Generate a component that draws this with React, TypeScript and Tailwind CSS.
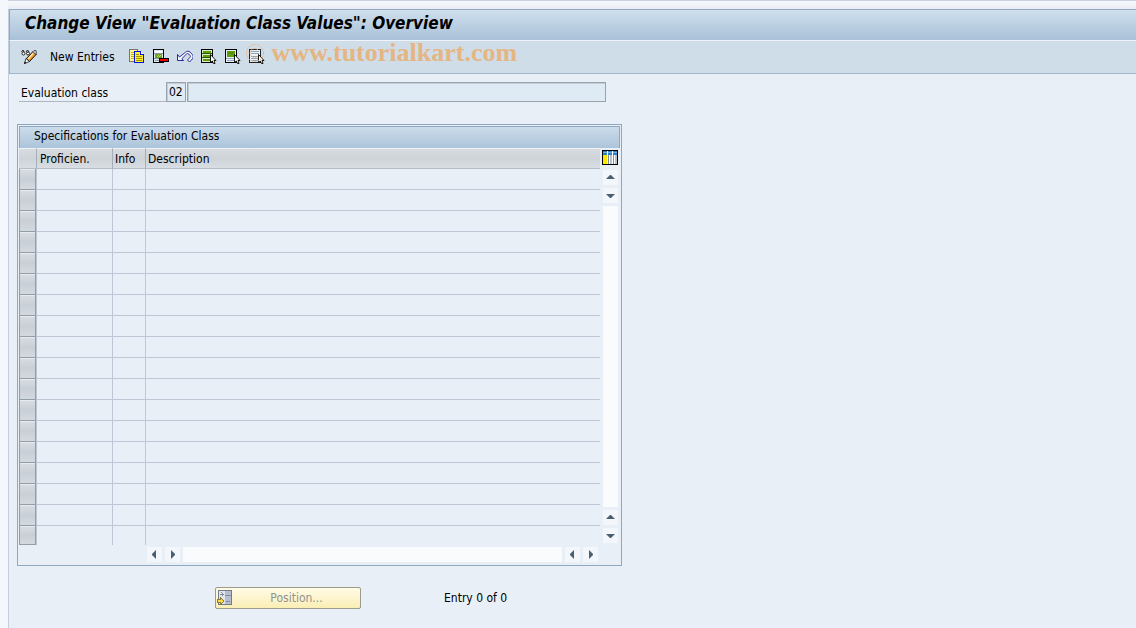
import React from "react";

type IconProps = { className?: string };

function Svg({ className = "", children }: React.PropsWithChildren<IconProps>) {
  return (
    <svg
      viewBox="0 0 16 16"
      className={`size-4 shrink-0 ${className}`}
      shapeRendering="crispEdges"
      fill="none"
      aria-hidden="true"
    >
      {children}
    </svg>
  );
}

function DisplayChangeIcon() {
  return (
    <Svg>
      <g shapeRendering="auto">
        <path d="M.5 3 2 1l1 2M5 3l1.500-2L8 3" stroke="#222" />
        <circle cx="2.500" cy="4.500" r="1.500" fill="#fff" stroke="#222" />
        <circle cx="7" cy="4.500" r="1.500" fill="#fff" stroke="#222" />
        <path d="M5.500 9.500 12 2.500 15.500 5 8.500 12.500Z" fill="#f59a1c" stroke="#111" />
        <path d="M7 10 12.500 4" stroke="#ffe9b8" strokeWidth="1.300" />
        <path d="M11.500 3 13 1.500h2l.5 2-1 2Z" fill="#b4bcc4" stroke="#333" strokeWidth=".7" />
        <path d="m3.500 14.500 1.500-5 3.500 3Z" fill="#fff" stroke="#111" strokeWidth=".8" />
        <path d="m3 15 .8-2.500 1.700 1.500Z" fill="#111" />
      </g>
    </Svg>
  );
}

function CopyIcon() {
  return (
    <Svg>
      <path d="M.5.5h8v12h-8z" fill="#fff79a" stroke="#77776a" />
      <path d="M2 3.500h4M2 5.500h4M2 7.500h4M2 9.500h4" stroke="#c8b400" />
      <path d="M5.500 2.500h6l3 3v8h-9z" fill="#ffee32" stroke="#0010e0" />
      <path d="M11.500 2.500v3h3" fill="#fff" stroke="#0010e0" />
      <path d="M7 5.500h3M7 7.500h6M7 9.500h6M7 11.500h6" stroke="#a39500" />
    </Svg>
  );
}

function DeleteIcon() {
  return (
    <Svg>
      <path d="M.5.5h10v13H.5z" fill="#dfe8ee" stroke="#000" />
      <path d="M2 2h7v2H2z" fill="#fff" />
      <path d="M1 4.500h9M1 9.500h5" stroke="#8795a5" />
      <path d="M2 5h7v4H2z" fill="#6fa51c" />
      <path d="M5 6h1v1H5zM7 6h1v1H7zM4 7h1v1H4zM6 7h1v1H6z" fill="#b4d96a" />
      <path d="M2 11.500h4" stroke="#8fa2b6" />
      <path d="M6 9h10v4H6z" fill="#000" />
      <path d="M7 10h8v2H7z" fill="#f00000" />
    </Svg>
  );
}

function UndoIcon() {
  return (
    <Svg>
      <g shapeRendering="auto">
        <path
          d="M.5 5.500v6h6L4.800 9.700 9.500 5c.8-.7 1.600-.6 2.200 0l1.200 1.300c.7.700.7 1.400 0 2.200L10.500 11l2 2 3-3.200c.8-1.500.8-3-.2-4.300l-2.300-2.400c-1.300-1.200-3-1.200-4.300 0L2.500 8Z"
          fill="#f5f9ff"
          stroke="#15158c"
          strokeWidth=".9"
        />
      </g>
    </Svg>
  );
}

function PointerMark() {
  return (
    <g shapeRendering="auto">
      <path d="M9.500 5.500v8l1.800-1.500 1.200 2.500h1.500l-1-3h2Z" fill="#fff" stroke="#000" strokeWidth=".9" />
    </g>
  );
}

function SelectAllIcon() {
  return (
    <Svg>
      <path d="M.5.5h11v13H.5z" fill="#dfeccb" stroke="#000" />
      <path d="M2 2h8v2H2zM2 6h8v2H2zM2 10h8v2H2z" fill="#5d9e0a" />
      <path d="M1 4.500h10M1 8.500h10" stroke="#2d5a00" />
      <PointerMark />
    </Svg>
  );
}

function SelectBlockIcon() {
  return (
    <Svg>
      <path d="M.5.5h11v13H.5z" fill="#e6edf3" stroke="#000" />
      <path d="M2 2h8v6H2z" fill="#5d9e0a" />
      <path d="M3 3h1v1H3zM5 3h1v1H5zM7 3h1v1H7zM4 4h1v1H4zM6 4h1v1H6z" fill="#4a8300" />
      <path d="M1 9.500h9M2 11.500h7" stroke="#93a8bc" />
      <PointerMark />
    </Svg>
  );
}

function DeselectAllIcon() {
  return (
    <Svg>
      <path d="M.5.5h11v13H.5z" fill="#eef3f8" stroke="#1d2329" />
      <path d="M2 2.500h8M2 4.500h8M2 7.500h8M2 9.500h8M2 11.500h7" stroke="#8fa2b6" />
      <PointerMark />
    </Svg>
  );
}

function ConfigureIcon() {
  return (
    <Svg>
      <path d="M.5.5h15v14H.5z" fill="#fff" stroke="#000" />
      <path d="M1 1h14v4H1z" fill="#2b7fc0" />
      <path d="M1 2h14v1H1z" fill="#6db3e4" />
      <path d="M1 5h4v9H1z" fill="#ffe500" />
      <path d="M8 5h2v9H8zM13 5h2v9h-2z" fill="#b7c1cc" />
      <path d="M5.500 1v13M10.500 1v13" stroke="#fff" />
      <path d="M6.500 5v9M11.500 5v9" stroke="#7f8b98" />
    </Svg>
  );
}

function PositionIcon() {
  return (
    <Svg>
      <path d="M1.500.5h13v14h-13z" fill="#e1e6ed" stroke="#737b86" />
      <path d="M8 1h6v13H8z" fill="#b9bdd2" />
      <path d="M8 5.500h6M9 11.500h4M3 4.500h4" stroke="#858c9e" />
      <path d="m4.500 2.500 2 2-2 2" stroke="#858c9e" />
      <path d="M.5 9.500h3v-2l3.500 3.500-3.500 3.500v-2h-3z" fill="#f6df42" stroke="#8c7d36" />
    </Svg>
  );
}

type Direction = "up" | "down" | "left" | "right";

const arrows: Record<Direction, string> = {
  up: "M3 9h9L8 5H7Z",
  down: "M3 6h9l-4 4H7Z",
  left: "M9 3v9L5 8V7Z",
  right: "M6 3v9l4-4V7Z",
};

function ScrollButton({ direction }: { direction: Direction }) {
  return (
    <button type="button" aria-label={`Scroll ${direction}`} className="size-[15px] shrink-0 bg-[#f3f7fb]">
      <svg viewBox="0 0 15 15" className="size-[15px]" aria-hidden="true">
        <path d={arrows[direction]} fill="#4a5f70" />
      </svg>
    </button>
  );
}

const tools = [
  { label: "Copy As", Icon: CopyIcon },
  { label: "Delete", Icon: DeleteIcon },
  { label: "Undo Change", Icon: UndoIcon },
  { label: "Select All", Icon: SelectAllIcon },
  { label: "Select Block", Icon: SelectBlockIcon },
  { label: "Deselect All", Icon: DeselectAllIcon },
];

const rows = Array.from({ length: 18 }, (_, i) => i + 1);

function Toolbar() {
  return (
    <div className="flex h-[33px] items-center border-b border-l border-[#a3b5c6] bg-[#cfdde8] pl-[11px]">
      <button type="button" aria-label="Display or change">
        <DisplayChangeIcon />
      </button>
      <button type="button" className="mr-3 ml-[13px] whitespace-nowrap">
        New Entries
      </button>
      <div className="ml-0.5 flex gap-2">
        {tools.map(({ label, Icon }) => (
          <button key={label} type="button" aria-label={label} className="relative">
            <Icon />
            {label === "Deselect All" && (
              <svg viewBox="0 0 20 20" className="absolute -top-1.5 -left-1 size-5 max-w-none" fill="none" aria-hidden="true">
                <circle cx="10" cy="10" r="8.500" stroke="#e5b583" strokeDasharray="2 1" />
                <path d="M13 7a4.500 4.500 0 1 0 0 6" stroke="#e5b583" strokeDasharray="2 1" />
              </svg>
            )}
          </button>
        ))}
      </div>
      <span className="mb-2 ml-[7px] font-['Liberation_Serif',serif] text-[26px] leading-6 font-bold whitespace-nowrap text-[#e5b583]">
        www.tutorialkart.com
      </span>
    </div>
  );
}

function SpecificationTable() {
  return (
    <section className="w-[605px] max-w-full border border-[#8fa8c0] p-px pb-[3px]">
      <h2 className="h-[22px] border border-b-0 border-[#8fa8c0] bg-linear-to-b from-[#cbdceb] to-[#adc4da] pl-[14px] leading-[19px]">
        Specifications for Evaluation Class
      </h2>
      <div className="flex">
        <table className="flex-1 table-fixed border-separate border-spacing-0 text-left">
          <colgroup>
            <col className="w-[18px]" />
            <col className="w-[76px]" />
            <col className="w-[33px]" />
            <col />
          </colgroup>
          <thead>
            <tr className="h-[21px] bg-linear-to-b from-[#d9dde1] via-[#ced3d8] to-[#d9dfe4] *:border-t *:border-b *:border-t-[#eef2f5] *:border-b-[#b4bdc8] *:p-0 *:pt-0.5 *:leading-[17px] *:font-normal">
              <th aria-label="Row selection" className="border-r border-r-[#a4afbb]" />
              <th className="border-r border-r-[#a4afbb] pl-[3px]!">Proficien.</th>
              <th className="border-r border-r-[#a4afbb] pl-[2px]!">Info</th>
              <th className="pl-[2px]!">Description</th>
            </tr>
          </thead>
          <tbody>
            {rows.map((row) => (
              <tr key={row} className="group h-[21px] *:border-[#bdc7d5] *:p-0 last:h-[19px]">
                <td className="border-r">
                  <button
                    type="button"
                    aria-label={`Select row ${row}`}
                    className="block h-[21px] w-full border border-t-0 border-[#929daa] bg-linear-to-b from-[#d9dde2] via-[#c9cfd6] to-[#d4d9de] shadow-[inset_0_1px_0_#e7ebee] group-last:h-[19px]"
                  />
                </td>
                <td className="border-r border-b group-last:border-b-0" />
                <td className="border-r border-b group-last:border-b-0" />
                <td className="border-b group-last:border-b-0" />
              </tr>
            ))}
          </tbody>
        </table>
        <div className="flex w-5 flex-col items-center">
          <button type="button" aria-label="Table settings" className="mb-1 h-[18px] pt-0.5">
            <ConfigureIcon />
          </button>
          <div className="flex flex-1 flex-col gap-[3px] pb-0.5">
            <ScrollButton direction="up" />
            <ScrollButton direction="down" />
            <div className="w-[15px] flex-1 bg-[#fafbfc]" />
            <ScrollButton direction="up" />
            <ScrollButton direction="down" />
          </div>
        </div>
      </div>
      <div className="mt-0.5 mr-[22px] ml-[128px] flex gap-[3px]">
        <ScrollButton direction="left" />
        <ScrollButton direction="right" />
        <div className="h-[15px] flex-1 bg-[#fafbfc]" />
        <ScrollButton direction="left" />
        <ScrollButton direction="right" />
      </div>
    </section>
  );
}

export default function App() {
  return (
    <div className="min-h-screen bg-[#f4f7fb] pl-2 font-['DejaVu_Sans_Condensed','DejaVu_Sans',sans-serif] text-[12px] text-black">
      <div className="h-[9px] border-t border-[#c9d3e3] bg-linear-to-b from-[#f7f9fc] to-[#e9eef5]" />
      <main className="min-h-[calc(100vh-9px)] border-l border-[#c3cfde] bg-[#e8eff6]">
        <h1 className="h-8 border-t border-b border-l border-t-[#8fa8c0] border-b-[#eef4f9] border-l-[#8fa8c0] bg-linear-to-b from-[#cfdfec] to-[#a9c1d8] pl-[15px] text-[17px] leading-[27px] font-bold whitespace-nowrap italic">
          Change View "Evaluation Class Values": Overview
        </h1>
        <Toolbar />
        <form className="flex pt-2 pl-[10px]" onSubmit={(event) => event.preventDefault()}>
          <label htmlFor="evaluation-class" className="h-5 w-[147px] border-b border-[#adb7c2] pl-[2px] leading-[22px]">
            Evaluation class
          </label>
          <input
            id="evaluation-class"
            defaultValue="02"
            readOnly
            className="h-5 w-5 border border-[#9aa3ad] bg-[#deeaf4] pl-[2px] shadow-[inset_1px_1px_0_#c3ced8] outline-none"
          />
          <input
            aria-label="Evaluation class text"
            readOnly
            className="ml-px h-5 w-[419px] border border-[#9aa3ad] bg-[#deeaf4] px-1 shadow-[inset_1px_1px_0_#c3ced8] outline-none"
          />
        </form>
        <div className="pt-[22px] pl-2">
          <SpecificationTable />
        </div>
        <div className="flex items-center pt-[21px] pl-[206px]">
          <button
            type="button"
            disabled
            className="flex h-[22px] w-[146px] items-center rounded-[2px] border border-[#9b9b8e] bg-linear-to-b from-[#fffbe6] to-[#fbeeb4] pl-px text-[#929292]"
          >
            <PositionIcon />
            <span className="flex-1">Position...</span>
          </button>
          <span className="ml-[83px]">Entry 0 of 0</span>
        </div>
      </main>
    </div>
  );
}
